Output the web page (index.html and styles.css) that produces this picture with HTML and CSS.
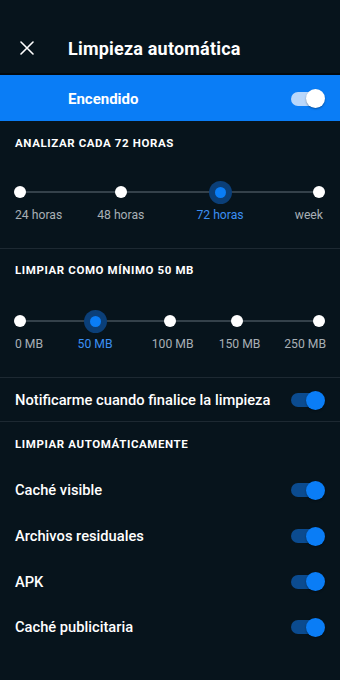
FILE: index.html
```html
<!DOCTYPE html>
<html lang="es">
<head>
<meta charset="utf-8">
<link rel="stylesheet" href="styles.css">
</head>
<body>
<div class="screen">
  <header class="appbar">
    <svg class="close" width="14" height="14" viewBox="0 0 14 14"><path d="M1 1L13 13M13 1L1 13" stroke="#fff" stroke-width="1.6" stroke-linecap="round"/></svg>
    <h1 class="title">Limpieza automática</h1>
  </header>

  <div class="master">
    <span class="master-label">Encendido</span>
    <span class="switch switch-light"><span class="knob"></span></span>
  </div>

  <section class="slider-section s1">
    <h2 class="caps">ANALIZAR CADA 72 HORAS</h2>
    <div class="slider">
      <div class="track"></div>
      <div class="stop first" style="left:0%"><span class="dot"></span><span class="lbl">24 horas</span></div>
      <div class="stop" style="left:33.7%"><span class="dot"></span><span class="lbl">48 horas</span></div>
      <div class="stop active" style="left:66.9%"><span class="dot"></span><span class="lbl">72 horas</span></div>
      <div class="stop last" style="left:100%"><span class="dot"></span><span class="lbl">week</span></div>
    </div>
  </section>

  <section class="slider-section s2">
    <h2 class="caps">LIMPIAR COMO MÍNIMO 50 MB</h2>
    <div class="slider">
      <div class="track"></div>
      <div class="stop first" style="left:0%"><span class="dot"></span><span class="lbl">0 MB</span></div>
      <div class="stop active" style="left:25.1%"><span class="dot"></span><span class="lbl">50 MB</span></div>
      <div class="stop shifted" style="left:50.2%"><span class="dot"></span><span class="lbl">100 MB</span></div>
      <div class="stop shifted" style="left:72.6%"><span class="dot"></span><span class="lbl">150 MB</span></div>
      <div class="stop last wide" style="left:100%"><span class="dot"></span><span class="lbl">250 MB</span></div>
    </div>
  </section>

  <div class="row notify">
    <span class="row-label">Notificarme cuando finalice la limpieza</span>
    <span class="switch"><span class="knob"></span></span>
  </div>

  <section class="auto">
    <h2 class="caps">LIMPIAR AUTOMÁTICAMENTE</h2>
    <div class="row item"><span class="row-label">Caché visible</span><span class="switch"><span class="knob"></span></span></div>
    <div class="row item"><span class="row-label">Archivos residuales</span><span class="switch"><span class="knob"></span></span></div>
    <div class="row item"><span class="row-label">APK</span><span class="switch"><span class="knob"></span></span></div>
    <div class="row item"><span class="row-label">Caché publicitaria</span><span class="switch"><span class="knob"></span></span></div>
  </section>
</div>
</body>
</html>
```

FILE: styles.css
```css
* { box-sizing: border-box; margin: 0; padding: 0; }
html, body { background: #07141c; }
body {
  width: 340px;
  height: 680px;
  overflow: hidden;
  font-family: Roboto, "Noto Sans", sans-serif;
  color: #fff;
}
.screen { display: flex; flex-direction: column; }

.appbar {
  height: 75px;
  padding: 24px 0 1px 20px;
  display: flex;
  align-items: center;
  border-bottom: 2px solid #03090d;
}
.close { flex: none; }
.title {
  margin-left: 34px;
  font-size: 18px;
  font-weight: 700;
  letter-spacing: 0.2px;
}

.master {
  height: 46px;
  background: #0a7df6;
  display: flex;
  align-items: center;
  justify-content: space-between;
  padding: 1px 15px 0 68px;
}
.master-label { font-size: 15px; font-weight: 700; }

.switch {
  position: relative;
  width: 34px;
  height: 19px;
  display: inline-flex;
  align-items: center;
}
.switch::before {
  content: "";
  width: 31px;
  height: 14px;
  border-radius: 7px;
  background: #0b4b8f;
}
.switch .knob {
  position: absolute;
  right: 0;
  top: 0;
  width: 19px;
  height: 19px;
  border-radius: 50%;
  background: #0a7df6;
  box-shadow: 0 1px 2px rgba(0,0,0,0.35);
}
.switch-light::before { background: #b9d7fb; }
.switch-light .knob { background: #fff; }

.caps {
  font-size: 11.5px;
  font-weight: 700;
  letter-spacing: 0.6px;
  line-height: 22px;
  padding-left: 15px;
}

.slider-section { border-bottom: 1px solid #1d2932; }
.s1 { padding: 11px 0 24px; }
.s2 { padding: 10px 0 24px; }
.slider {
  position: relative;
  margin: 26px 21px 0 20px;
  height: 44px;
}
.s2 .slider { margin-top: 28px; }
.track {
  position: absolute;
  left: 0; right: 0;
  top: 11px;
  height: 2px;
  background: #34414a;
}
.stop {
  position: absolute;
  top: 0;
  width: 0;
  display: flex;
  flex-direction: column;
  align-items: center;
}
.dot {
  width: 12px;
  height: 12px;
  margin-top: 6px;
  border-radius: 50%;
  background: #fff;
  flex: none;
}
.active .dot {
  width: 11px;
  height: 11px;
  margin-top: 6.5px;
  background: #0a7df6;
  box-shadow: 0 0 0 6px #0b3f78;
}
.lbl {
  margin-top: 8px;
  font-size: 12.2px;
  line-height: 18px;
  color: #a7afb5;
  white-space: nowrap;
}
.active .lbl { color: #3b8ff2; }
.shifted .lbl { margin-left: 5px; }
.first .lbl { align-self: flex-start; margin-left: -5px; }
.last .lbl { align-self: flex-end; margin-right: -4px; }
.last.wide .lbl { margin-right: -7px; }

.row {
  display: flex;
  align-items: center;
  justify-content: space-between;
  padding: 0 15px;
}
.row-label { font-size: 14.7px; font-weight: 500; }
.notify {
  height: 44px;
  padding-top: 1px;
  border-bottom: 1px solid #1d2932;
}
.auto { padding-top: 11px; }
.auto .caps { margin-bottom: 12px; }
.item { height: 45.7px; padding-top: 1px; }
```
